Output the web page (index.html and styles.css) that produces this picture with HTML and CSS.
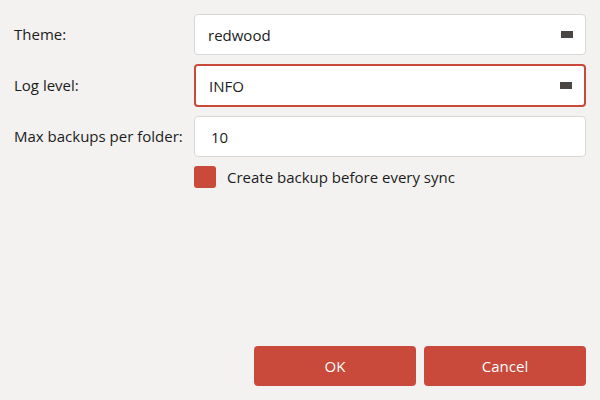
FILE: index.html
```html
<!DOCTYPE html>
<html>
<head>
<meta charset="utf-8">
<link rel="stylesheet" href="styles.css">
</head>
<body>
<div class="dialog">
  <div class="form">
    <div class="label">Theme:</div>
    <div class="field"><span>redwood</span><i class="arrow"></i></div>
    <div class="label">Log level:</div>
    <div class="field focused"><span>INFO</span><i class="arrow"></i></div>
    <div class="label">Max backups per folder:</div>
    <div class="field"><span class="num">10</span></div>
    <div></div>
    <label class="check"><span class="box"></span><span>Create backup before every sync</span></label>
  </div>
  <div class="buttons">
    <button class="btn">OK</button>
    <button class="btn">Cancel</button>
  </div>
</div>
</body>
</html>
```
FILE: styles.css
```css
html, body { margin: 0; padding: 0; }
body {
  background: #f3f2f0;
  font-family: "Open Sans", "Noto Sans", sans-serif;
  font-size: 15px;
  color: #1c1c1c;
}
.dialog {
  box-sizing: border-box;
  height: 400px;
  padding: 14px;
  display: flex;
  flex-direction: column;
}
.form {
  display: grid;
  grid-template-columns: 180px 1fr;
  row-gap: 9px;
  align-items: center;
}
.label { margin-top: -2px; }
.field {
  box-sizing: border-box;
  height: 41px;
  background: #fff;
  border: 1px solid #d9d8d6;
  border-radius: 4px;
  display: flex;
  align-items: center;
  justify-content: space-between;
  padding: 0 12px 0 13px;
}
.field.focused {
  height: 43px;
  border: 2px solid #c9493a;
  padding-left: 13px;
}
.num { padding-left: 3px; }
.arrow {
  display: block;
  width: 12px;
  height: 7px;
  background: #4a4644;
}
.check {
  display: flex;
  align-items: center;
  gap: 11px;
  height: 22px;
}
.box {
  width: 22px;
  height: 22px;
  border-radius: 3px;
  background: #c9493a;
}
.buttons {
  margin-top: auto;
  display: flex;
  justify-content: flex-end;
  gap: 8px;
}
.btn {
  width: 162px;
  height: 40px;
  border: none;
  border-radius: 4px;
  background: #c9493a;
  color: #fff;
  font-family: "Open Sans", "Noto Sans", sans-serif;
  font-size: 15px;
}
```
